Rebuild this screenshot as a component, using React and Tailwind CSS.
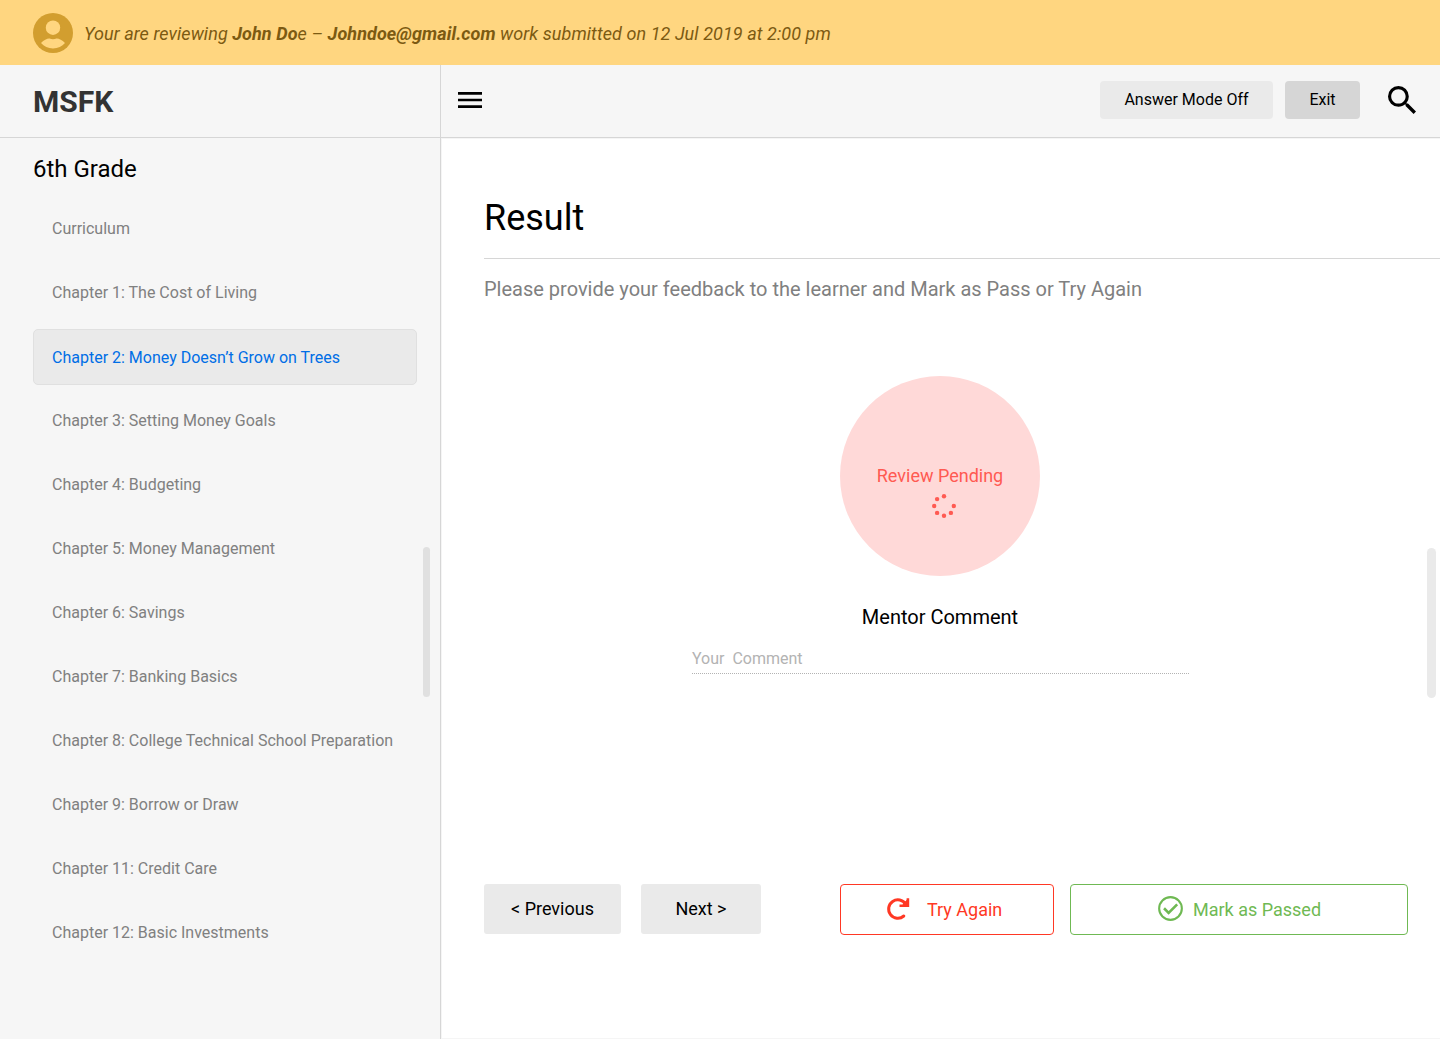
const chapters = [
  'Curriculum',
  'Chapter 1: The Cost of Living',
  'Chapter 2: Money Doesn’t Grow on Trees',
  'Chapter 3: Setting Money Goals',
  'Chapter 4: Budgeting',
  'Chapter 5: Money Management',
  'Chapter 6: Savings',
  'Chapter 7: Banking Basics',
  'Chapter 8: College Technical School Preparation',
  'Chapter 9: Borrow or Draw',
  'Chapter 11: Credit Care',
  'Chapter 12: Basic Investments',
];
const activeChapter = 2;

function AvatarIcon() {
  return (
    <svg className="h-10 w-10 shrink-0" viewBox="0 0 40 40">
      <circle cx="20" cy="20" r="20" fill="#d29e2f" />
      <circle cx="20" cy="14.7" r="7.2" fill="#ffd680" />
      <path
        d="M8 30C11 27 14.5 25.3 16.6 25.6Q20 27 23.4 25.6C25.5 25.3 29 27 32 30C29 33.6 25 35.4 20 35.4S11 33.6 8 30Z"
        fill="#ffd680"
      />
    </svg>
  );
}

function MenuIcon() {
  return (
    <svg className="h-4 w-6" viewBox="0 0 24 16">
      <path d="M0 0h24v2.67H0zM0 6.67h24v2.67H0zM0 13.33h24V16H0z" />
    </svg>
  );
}

function SearchIcon() {
  return (
    <svg className="h-7 w-7" viewBox="3 3 17.49 17.49">
      <path d="M15.5 14h-.79l-.28-.27A6.471 6.471 0 0 0 16 9.5 6.5 6.5 0 1 0 9.5 16c1.61 0 3.09-.59 4.23-1.57l.27.28v.79l5 4.99L20.49 19l-4.99-5zm-6 0C7.01 14 5 11.99 5 9.5S7.01 5 9.5 5 14 7.01 14 9.5 11.99 14 9.5 14z" />
    </svg>
  );
}

function SpinnerIcon() {
  const dots = [[12, 2.2], [5.1, 5.1], [2.2, 12], [5.1, 18.9], [12, 21.8], [18.9, 18.9], [21.8, 12]];
  return (
    <svg className="h-6 w-6" viewBox="0 0 24 24" fill="#ff5a52">
      {dots.map(([x, y]) => (
        <circle key={`${x}-${y}`} cx={x} cy={y} r="2.2" />
      ))}
    </svg>
  );
}

function RedoIcon() {
  return (
    <svg className="mb-0.5 h-6 w-6" viewBox="-0.5 0.2 24 24" fill="none" stroke="#ff3824" strokeWidth="3">
      <path d="M17.3 19.2A9.2 9.2 0 1 1 19.2 7.4" strokeLinecap="round" />
      <path d="M21.4 1.4V9H13" strokeWidth="2.6" />
      <path d="M17 8.5L21.5 4" />
    </svg>
  );
}

function CheckIcon() {
  return (
    <svg className="mb-[3px] h-[25px] w-[25px]" viewBox="0 0 24 24" fill="none" stroke="#6fb953">
      <circle cx="12" cy="12" r="10.9" strokeWidth="2" />
      <path d="M5.8 11.8L10.2 16.2L18.4 8" strokeWidth="2.5" />
    </svg>
  );
}

export default function App() {
  return (
    <div className="flex h-[1039px] w-[1440px] flex-col overflow-hidden bg-white font-['Roboto',sans-serif] text-black">
      <div className="flex h-[65px] shrink-0 items-center gap-[11px] bg-[#ffd680] pl-[33px]">
        <AvatarIcon />
        <p className="pt-[3px] text-lg tracking-[0.075px] text-[#7c5a12] italic">
          Your are reviewing <b>John Do</b>e – <b>Johndoe@gmail.com</b> work submitted on 12 Jul 2019 at 2:00 pm
        </p>
      </div>

      <div className="flex min-h-0 flex-1">
        <aside className="relative flex w-[441px] shrink-0 flex-col border-r border-[#d6d6d6] bg-[#f6f6f6]">
          <div className="flex h-[73px] shrink-0 items-center border-b border-[#d6d6d6] pt-0.5 pl-[33px]">
            <span className="text-[30px] leading-9 font-bold text-[#333]">MSFK</span>
          </div>
          <h2 className="mt-[15px] pl-[33px] text-2xl">6th Grade</h2>
          <nav className="mt-4 flex flex-col gap-2 pr-[23px] pl-[33px]">
            {chapters.map((title, i) => (
              <a
                key={title}
                className={
                  i === activeChapter
                    ? 'flex h-14 items-center rounded-[5px] border border-[#e0e0e0] bg-[#eaeaea] pt-0.5 pl-[18px] text-base text-[#006ee6]'
                    : 'flex h-14 items-center pb-px pl-[19px] text-base whitespace-nowrap text-[#808080]'
                }
              >
                {title}
              </a>
            ))}
          </nav>
          <div className="absolute top-[482px] right-[10px] h-[150px] w-[7px] rounded-full bg-[#e0e0e0]" />
        </aside>

        <div className="relative flex min-w-0 flex-1 flex-col">
          <header className="flex h-[73px] shrink-0 items-center border-b border-[#d6d6d6] bg-[#f6f6f6] pr-6 pb-[3px] pl-[17px]">
            <MenuIcon />
            <button className="ml-auto h-[38px] w-[173px] rounded bg-[#eaeaea] text-base">Answer Mode Off</button>
            <button className="ml-3 h-[38px] w-[75px] rounded bg-[#d6d6d6] text-base">Exit</button>
            <div className="ml-7">
              <SearchIcon />
            </div>
          </header>

          <main className="flex flex-1 flex-col border-t border-b border-l border-[#f5f5f5] pl-[42px]">
            <h1 className="mt-[58px] text-4xl leading-[42px]">Result</h1>
            <div className="mt-[19px] border-t border-[#d6d6d6]" />
            <p className="mt-4 text-xl text-[#808080]">
              Please provide your feedback to the learner and Mark as Pass or Try Again
            </p>

            <div className="mt-[73px] ml-[356px] flex h-[200px] w-[200px] flex-col items-center rounded-full bg-[#ffd9d8] pt-[86px]">
              <span className="text-lg text-[#ff5a52]">Review Pending</span>
              <div className="mt-1 ml-2">
                <SpinnerIcon />
              </div>
            </div>

            <div className="mt-[27px] ml-[208px] flex w-[497px] flex-col">
              <h3 className="pr-px text-center text-xl">Mentor Comment</h3>
              <div className="mt-4 h-[27px] border-b border-dotted border-[#b3b3b3] text-base whitespace-pre text-[#b3b3b3]">
                {'Your  Comment'}
              </div>
            </div>

            <div className="mt-[210px] flex items-start">
              <button className="h-[50px] w-[137px] rounded-[3px] bg-[#eaeaea] text-lg">&lt; Previous</button>
              <button className="ml-5 h-[50px] w-[120px] rounded-[3px] bg-[#eaeaea] text-lg">Next &gt;</button>
              <button className="ml-[79px] flex h-[51px] w-[214px] items-center rounded-[4px] border border-[#ff3824] pl-[45px] text-lg text-[#ff3824]">
                <RedoIcon />
                <span className="ml-[17px]">Try Again</span>
              </button>
              <button className="ml-4 flex h-[51px] w-[338px] items-center rounded-[4px] border border-[#6fb953] pl-[87px] text-lg text-[#6fb953]">
                <CheckIcon />
                <span className="ml-[10px]">Mark as Passed</span>
              </button>
            </div>
          </main>
          <div className="absolute top-[483px] right-1 h-[150px] w-[9px] rounded-full bg-[#eaeaea]" />
        </div>
      </div>
    </div>
  );
}
